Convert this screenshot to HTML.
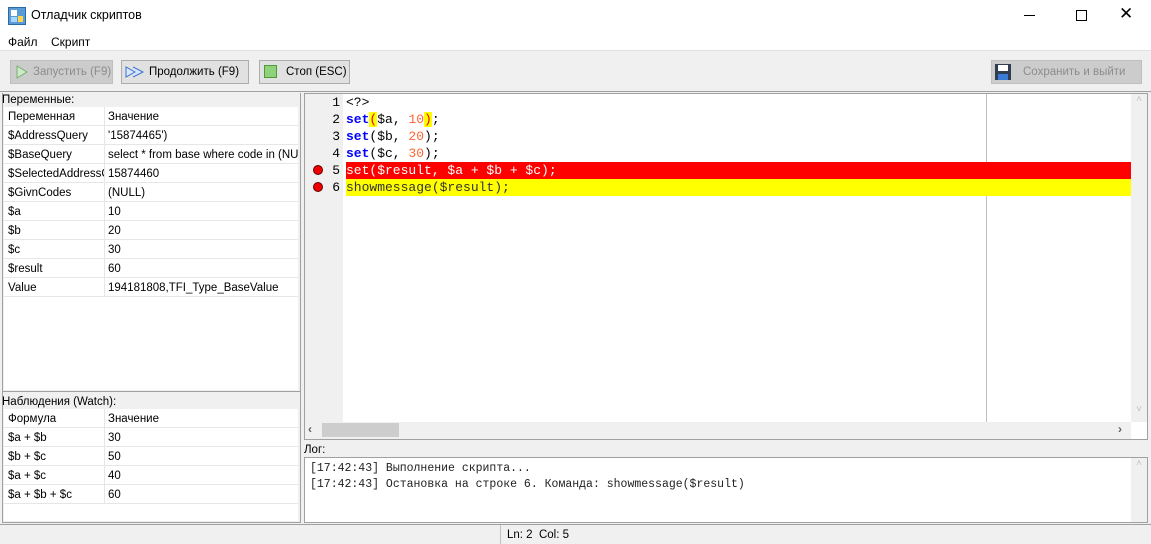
<!DOCTYPE html>
<html><head><meta charset="utf-8"><style>
*{margin:0;padding:0;box-sizing:border-box}
body{width:1151px;height:544px;overflow:hidden;background:#f0f0f0;font-family:"Liberation Sans",sans-serif;font-size:11.5px;color:#000;position:relative}
.a{position:absolute;white-space:nowrap}
.btn{position:absolute;top:60px;height:24px;border:1px solid #adadad;background:#e1e1e1;font-size:11.5px;line-height:23px;white-space:nowrap}
.tbl{position:absolute;left:4px;width:294px;background:#fff}
.row{height:19px;border-bottom:1px solid #e6e6e6;position:relative;line-height:20px;white-space:nowrap;overflow:hidden}
.row span{position:absolute;top:0}
.c1{left:4px}.c2{left:104px}
.row:before{content:"";position:absolute;left:100px;top:0;bottom:0;border-left:1px solid #e6e6e6}
.mono{font-family:"Liberation Mono",monospace;font-size:13px}
.ln{position:absolute;left:304px;width:36px;text-align:right;height:17px;line-height:17px}
.cl{position:absolute;left:346px;height:17px;line-height:17px;white-space:pre}
.k{color:#0000ff;font-weight:bold}.n{color:#ff6633}
.dot{position:absolute;left:313px;width:10px;height:10px;border-radius:50%;background:#e00;border:1px solid #600}
</style></head><body>
<div class="a" style="left:0;top:0;width:1151px;height:32px;background:#fff"></div>
<svg class="a" style="left:8px;top:7px" width="18" height="18"><rect x="0.5" y="0.5" width="17" height="17" fill="#5a9bd5" stroke="#2a6aa8"/><rect x="3" y="3" width="6" height="6" fill="#fff"/><rect x="10" y="9" width="5" height="6" fill="#ffd54a"/><rect x="3" y="10" width="6" height="5" fill="#a8d8ff"/></svg>
<div class="a" style="left:31px;top:8px;font-size:12.5px">Отладчик скриптов</div>
<div class="a" style="left:1024px;top:15px;width:11px;border-top:1px solid #000"></div>
<div class="a" style="left:1076px;top:10px;width:11px;height:11px;border:1px solid #000"></div>
<div class="a" style="left:1119px;top:4px;font-size:17px;font-weight:300">✕</div>
<div class="a" style="left:0;top:32px;width:1151px;height:18px;background:#fff"></div>
<div class="a" style="left:8px;top:35px;font-size:12px">Файл</div>
<div class="a" style="left:51px;top:35px;font-size:12px">Скрипт</div>
<div class="a" style="left:0;top:50px;width:1151px;border-top:1px solid #e0e0e0"></div>
<div class="btn" style="left:10px;width:103px;background:#cccccc;border-color:#bfbfbf;color:#8c8c8c"><svg class="a" style="left:4px;top:4px" width="14" height="14"><path d="M2 1L12 7L2 13Z" fill="#cfe8c8" stroke="#6fb36a"/></svg><span style="position:absolute;left:22px">Запустить (F9)</span></div>
<div class="btn" style="left:121px;width:128px"><svg class="a" style="left:3px;top:5px" width="20" height="12"><path d="M1 1L10 6L1 11Z M8 1L18 6L8 11" fill="#dbe8fb" stroke="#3d73c8"/></svg><span style="position:absolute;left:27px">Продолжить (F9)</span></div>
<div class="btn" style="left:259px;width:91px"><div class="a" style="left:4px;top:4px;width:13px;height:13px;background:#8fd27a;border:1px solid #4e9a3b"></div><span style="position:absolute;left:26px">Стоп (ESC)</span></div>
<div class="btn" style="left:991px;width:151px;background:#cccccc;border-color:#bfbfbf;color:#8c8c8c"><svg class="a" style="left:3px;top:3px" width="16" height="16"><rect x="0" y="0" width="16" height="16" fill="#2e3d52"/><rect x="3" y="1" width="10" height="6" fill="#fff"/><rect x="3" y="10" width="10" height="6" fill="#3a7bd5"/></svg><span style="position:absolute;left:31px">Сохранить и выйти</span></div>
<div class="a" style="left:0;top:91px;width:1151px;border-top:1px solid #a0a0a0"></div>
<!-- left panel -->
<div class="a" style="left:2px;top:93px;width:299px;height:430px;border:1px solid #a0a0a0;border-top:none"></div>
<div class="a" style="left:2px;top:94px">Переменные:</div>
<div class="tbl" style="top:107px;height:283px">
<div class="row"><span class="c1">Переменная</span><span class="c2">Значение</span></div>
<div class="row"><span class="c1">$AddressQuery</span><span class="c2">'15874465')</span></div>
<div class="row"><span class="c1">$BaseQuery</span><span class="c2">select * from base where code in (NULL)</span></div>
<div class="row"><span class="c1" style="width:96px;overflow:hidden">$SelectedAddressCode</span><span class="c2">15874460</span></div>
<div class="row"><span class="c1">$GivnCodes</span><span class="c2">(NULL)</span></div>
<div class="row"><span class="c1">$a</span><span class="c2">10</span></div>
<div class="row"><span class="c1">$b</span><span class="c2">20</span></div>
<div class="row"><span class="c1">$c</span><span class="c2">30</span></div>
<div class="row"><span class="c1">$result</span><span class="c2">60</span></div>
<div class="row"><span class="c1">Value</span><span class="c2">194181808,TFI_Type_BaseValue</span></div>
</div>
<div class="a" style="left:2px;top:391px;width:299px;border-top:1px solid #a0a0a0"></div>
<div class="a" style="left:2px;top:396px">Наблюдения (Watch):</div>
<div class="tbl" style="top:409px;height:112px">
<div class="row"><span class="c1">Формула</span><span class="c2">Значение</span></div>
<div class="row"><span class="c1">$a + $b</span><span class="c2">30</span></div>
<div class="row"><span class="c1">$b + $c</span><span class="c2">50</span></div>
<div class="row"><span class="c1">$a + $c</span><span class="c2">40</span></div>
<div class="row"><span class="c1">$a + $b + $c</span><span class="c2">60</span></div>
</div>
<!-- editor -->
<div class="a" style="left:304px;top:93px;width:844px;height:347px;background:#fff;border:1px solid #a0a0a0"></div>
<div class="a" style="left:305px;top:94px;width:38px;height:328px;background:#f0f0f0"></div>
<div class="a" style="left:986px;top:94px;height:328px;border-left:1px solid #c0c0c0"></div>
<div class="a" style="left:346px;top:162px;width:785px;height:17px;background:#ff0000"></div>
<div class="a" style="left:346px;top:179px;width:785px;height:17px;background:#ffff00"></div>
<div class="mono">
<div class="ln" style="top:94px">1</div><div class="ln" style="top:111px">2</div><div class="ln" style="top:128px">3</div><div class="ln" style="top:145px">4</div><div class="ln" style="top:162px">5</div><div class="ln" style="top:179px">6</div>
<div class="cl" style="top:94px">&lt;?&gt;</div>
<div class="cl" style="top:111px"><span class="k">set</span><span style="background:#ffff00;color:#e00">(</span>$a, <span class="n">10</span><span style="background:#ffff00;color:#e00">)</span>;</div>
<div class="cl" style="top:128px"><span class="k">set</span>($b, <span class="n">20</span>);</div>
<div class="cl" style="top:145px"><span class="k">set</span>($c, <span class="n">30</span>);</div>
<div class="cl" style="top:162px;color:#fff">set($result, $a + $b + $c);</div>
<div class="cl" style="top:179px;color:#333">showmessage($result);</div>
</div>
<div class="dot" style="top:165px"></div><div class="dot" style="top:182px"></div>
<div class="a" style="left:1131px;top:94px;width:16px;height:328px;background:#f0f0f0;color:#c0c0c0;font-size:10px;text-align:center">˄</div>
<div class="a" style="left:1131px;top:404px;width:16px;color:#c0c0c0;font-size:10px;text-align:center">˅</div>
<div class="a" style="left:305px;top:422px;width:826px;height:17px;background:#f0f0f0"></div>
<div class="a" style="left:322px;top:423px;width:77px;height:14px;background:#cdcdcd"></div>
<div class="a" style="left:308px;top:422px;font-size:12px;color:#606060;font-weight:bold">‹</div>
<div class="a" style="left:1118px;top:422px;font-size:12px;color:#606060;font-weight:bold">›</div>
<!-- log -->
<div class="a" style="left:304px;top:444px">Лог:</div>
<div class="a" style="left:304px;top:457px;width:844px;height:66px;background:#fff;border:1px solid #a0a0a0"></div>
<div class="a" style="left:1131px;top:458px;width:16px;height:64px;background:#f0f0f0;color:#c0c0c0;font-size:10px;text-align:center">˄</div>
<div class="a" style="left:310px;top:461px;font-family:'Liberation Mono',monospace;font-size:11.5px;line-height:16px;white-space:pre;color:#222">[17:42:43] Выполнение скрипта...
[17:42:43] Остановка на строке 6. Команда: showmessage($result)</div>
<!-- status -->
<div class="a" style="left:0;top:524px;width:1151px;border-top:1px solid #a0a0a0"></div>
<div class="a" style="left:500px;top:525px;height:19px;border-left:1px solid #c0c0c0"></div>
<div class="a" style="left:507px;top:529px">Ln: 2&nbsp; Col: 5</div>
</body></html>
